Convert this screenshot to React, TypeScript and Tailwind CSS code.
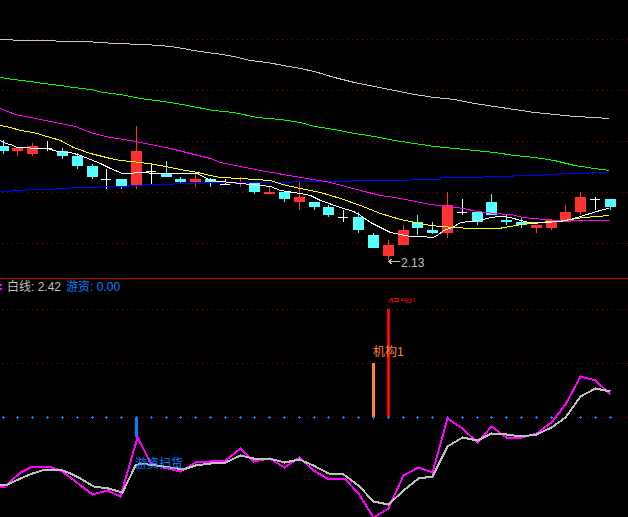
import React from "react";

type P = [number, number];
// x, high, low, bodyTop, bodyBottom, kind
type C = [number, number, number, number, number, "r" | "c" | "w"];

const candles: C[] = [
  [3, 140, 154, 146, 151, "c"], [17, 148, 156, 148, 151, "r"], [32, 143, 156, 146, 154, "r"],
  [47, 141, 151, 148, 148, "w"], [62, 148, 159, 151, 156, "c"], [77, 153, 169, 156, 166, "c"],
  [92, 164, 179, 166, 177, "c"], [106, 169, 189, 179, 179, "w"], [121, 179, 189, 179, 186, "c"],
  [136, 126, 189, 151, 186, "r"], [151, 163, 184, 171, 171, "w"], [166, 161, 177, 173, 177, "c"],
  [180, 177, 183, 179, 182, "c"], [195, 172, 187, 179, 182, "r"], [210, 178, 187, 179, 182, "c"],
  [225, 179, 185, 184, 184, "w"], [240, 177, 187, 182, 184, "r"], [254, 182, 194, 182, 192, "c"],
  [269, 187, 194, 192, 194, "r"], [284, 192, 202, 192, 199, "c"], [299, 182, 210, 197, 202, "r"],
  [314, 202, 210, 202, 207, "c"], [328, 205, 217, 207, 215, "c"], [343, 210, 222, 217, 217, "w"],
  [358, 212, 233, 217, 230, "c"], [373, 233, 248, 235, 248, "c"], [388, 240, 260, 245, 256, "r"],
  [403, 225, 245, 230, 245, "r"], [417, 215, 235, 222, 228, "c"], [432, 222, 234, 230, 233, "c"],
  [447, 192, 238, 205, 233, "r"], [462, 199, 215, 212, 212, "w"], [477, 211, 225, 212, 222, "c"],
  [491, 194, 215, 202, 215, "c"], [506, 215, 225, 220, 222, "c"], [521, 217, 228, 222, 225, "c"],
  [536, 225, 233, 225, 228, "r"], [551, 220, 230, 220, 228, "r"], [565, 205, 222, 212, 222, "r"],
  [580, 192, 215, 197, 212, "r"], [595, 197, 210, 199, 199, "w"], [610, 199, 210, 199, 207, "c"],
];

const topGrey: P[] = [[0,39],[25,40],[85,41],[100,42],[114,43],[144,44],[159,45],[170,46],[183,48],[193,50],[207,52],[222,54],[233,56],[250,60],[267,62],[283,65],[300,68],[314,71],[334,77],[354,82],[374,86],[394,90],[414,94],[434,97],[454,99],[474,103],[494,106],[514,109],[534,112],[554,114],[574,116],[594,117],[609,118]];
const green: P[] = [[0,77],[13,79],[30,81],[43,83],[60,85],[73,87],[90,89],[103,92],[120,94],[140,98],[163,101],[187,105],[213,110],[233,112],[257,117],[280,119],[300,122],[314,126],[334,129],[354,133],[374,136],[394,140],[414,143],[434,146],[454,148],[474,150],[494,152],[514,155],[534,157],[554,160],[574,165],[594,168],[609,170]];
const magenta: P[] = [[0,108],[7,111],[15,114],[30,117],[45,120],[55,122],[65,124],[75,126],[85,130],[93,133],[110,137],[130,140],[150,144],[170,148],[190,153],[210,158],[220,162],[260,170],[300,177],[330,182],[360,190],[380,195],[400,198],[420,202],[430,204],[447,206],[463,208],[477,211],[493,213],[510,214],[523,217],[543,219],[560,220],[609,220]];
const yellow: P[] = [[0,125],[10,127],[20,130],[33,132],[50,137],[60,140],[73,147],[90,153],[110,158],[120,160],[140,162],[160,165],[180,169],[197,172],[210,175],[220,177],[240,178],[270,180],[282,184],[300,188],[320,192],[340,198],[360,205],[380,213],[400,219],[420,223],[430,225],[440,226],[470,228],[498,228],[510,226],[533,222],[557,221],[570,219],[583,217],[609,215]];
const white: P[] = [[0,140],[5,143],[10,144],[17,147],[25,147],[33,148],[47,148],[57,151],[70,152],[80,155],[90,159],[100,163],[110,168],[122,173],[128,173],[140,172],[157,173],[187,173],[197,173],[210,180],[230,182],[250,184],[270,186],[280,190],[300,193],[310,195],[320,200],[340,207],[353,211],[360,215],[370,222],[380,227],[390,232],[400,234],[410,236],[420,236],[432,237],[437,235],[443,230],[452,227],[460,222],[470,221],[483,219],[490,217],[500,216],[510,217],[520,220],[533,223],[543,222],[560,221],[570,219],[583,215],[593,212],[603,209],[609,208]];
const blue: P[] = [[0,191],[10,191],[10,190],[25,190],[25,189],[55,189],[55,188],[70,188],[70,187],[99,187],[99,186],[128,186],[128,185],[144,185],[144,184],[173,184],[173,183],[203,183],[203,182],[250,182],[292,182],[292,181],[350,181],[350,180],[410,180],[410,179],[440,179],[440,177],[483,177],[483,176],[513,176],[513,175],[544,175],[544,174],[558,174],[558,173],[588,173],[588,172],[608,172]];

const lowMagenta: P[] = [[0,487],[5,486],[10,481],[20,472],[32,466],[48,466],[60,470],[70,477],[80,485],[92,494],[107,490],[120,496],[137,437],[150,462],[163,467],[180,471],[195,462],[225,460],[240,448],[253,461],[269,458],[284,467],[299,457],[313,470],[327,478],[344,478],[358,493],[373,517],[388,508],[403,475],[418,467],[432,472],[447,418],[462,428],[477,442],[491,426],[506,437],[521,437],[536,433],[551,422],[565,404],[580,376],[595,380],[610,394]];
const lowGrey: P[] = [[0,485],[7,484],[20,478],[32,473],[45,469],[60,469],[70,473],[80,478],[93,486],[108,488],[122,492],[135,465],[140,463],[163,466],[177,468],[183,469],[195,465],[210,463],[225,462],[240,455],[253,458],[269,458],[284,462],[299,459],[313,465],[328,473],[343,474],[358,485],[373,501],[388,504],[403,490],[418,478],[432,476],[447,446],[462,437],[477,440],[491,433],[506,434],[521,436],[536,434],[551,427],[565,417],[580,396],[595,388],[610,391]];

const pts = (p: P[]) => p.map(([x, y]) => `${x + 0.5},${y + 0.5}`).join(" ");
const colors = { r: "#ff3232", c: "#54ffff", w: "#ffffff" };

function Grid({ ys }: { ys: number[] }) {
  return (
    <>
      {ys.map((y) => (
        <line key={y} x1={2} x2={628} y1={y + 0.5} y2={y + 0.5} stroke="#900000" strokeWidth={1} strokeDasharray="1 4" />
      ))}
    </>
  );
}

function Upper() {
  return (
    <svg className="block" width={628} height={278} viewBox="0 0 628 278" shapeRendering="crispEdges" fill="none">
      <Grid ys={[39, 90, 141, 192, 243]} />
      {candles.map(([x, hi, lo, top, bot, k]) => {
        const col = colors[k];
        return (
          <g key={x}>
            <rect x={x} y={hi} width={1} height={lo - hi} fill={col} />
            {k === "w" ? (
              <rect x={x - 5} y={top} width={10} height={1} fill={col} />
            ) : (
              <rect x={x - 5} y={top} width={11} height={bot - top} fill={col} />
            )}
          </g>
        );
      })}
      <polyline points={pts(topGrey)} stroke="#c8c8c8" />
      <polyline points={pts(green)} stroke="#00ff00" />
      <polyline points={pts(blue)} stroke="#0000ff" />
      <polyline points={pts(magenta)} stroke="#ff00ff" />
      <polyline points={pts(yellow)} stroke="#ffff00" />
      <polyline points={pts(white)} stroke="#ffffff" />
      <path d="M388.5 261.5H400M388.5 261.5L392.5 258.5M388.5 261.5L392.5 264.5" stroke="#c0c0c0" />
    </svg>
  );
}

function Lower() {
  return (
    <svg className="block" width={628} height={238} viewBox="0 279 628 238" shapeRendering="crispEdges" fill="none">
      <Grid ys={[309, 363, 417]} />
      <rect x={372} y={363} width={3} height={54} fill="#ff8040" />
      <rect x={387} y={309} width={3} height={108} fill="#ff0000" />
      <rect x={135} y={417} width={3} height={20} fill="#0080ff" />
      {candles.map(([x]) => (
        <path key={x} d={`M${x - 1} ${417.5}H${x + 2}M${x + 0.5} 416V419`} stroke="#0080ff" />
      ))}
      <polyline points={pts(lowMagenta)} stroke="#ff00ff" strokeWidth={2} />
      <polyline points={pts(lowGrey)} stroke="#c0c0c0" strokeWidth={2} />
      <rect x={0} y={284} width={2} height={2} fill="#ff00ff" />
      <rect x={0} y={288} width={2} height={2} fill="#ff00ff" />
    </svg>
  );
}

export default function App() {
  return (
    <div className="w-[628px] h-[517px] overflow-hidden bg-black flex flex-col text-[12px] leading-[14px] font-['Liberation_Sans','Noto_Sans_CJK_SC',sans-serif]">
      <div className="relative h-[278px] shrink-0">
        <Upper />
        <span className="absolute left-[401px] top-[256px] text-[#c0c0c0]">2.13</span>
      </div>
      <div className="h-px shrink-0 bg-[#c00000]" />
      <div className="relative flex-1">
        <Lower />
        <div className="absolute left-[7px] top-[1px] flex gap-[5px]">
          <span className="text-[#c0c0c0]">白线: 2.42</span>
          <span className="text-[#0080ff]">游资: 0.00</span>
        </div>
        <div className="absolute left-[388px] top-[19px] h-[6px] overflow-hidden text-[#ff0000]">
          <span className="block -mt-[7px]">启动!</span>
        </div>
        <span className="absolute left-[373px] top-[66px] text-[#ff8040]">机构1</span>
        <span className="absolute left-[135px] top-[178px] text-[#0080ff]">游资扫货</span>
      </div>
    </div>
  );
}
